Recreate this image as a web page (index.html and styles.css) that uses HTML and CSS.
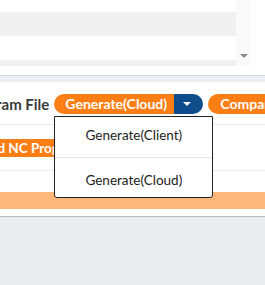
FILE: index.html
```html
<!DOCTYPE html>
<html lang="en">
<head>
    <meta charset="UTF-8">
    <meta name="viewport" content="width=device-width, initial-scale=1.0">
    <title>NC Program</title>
    <link rel="stylesheet" href="styles.css">
</head>
<body>
    <div class="list-panel">
        <div class="list-rows">
            <div class="row blank"></div>
            <div class="row gray"></div>
            <div class="row"></div>
            <div class="row gray thin"></div>
        </div>
        <div class="scrollbar">
            <span class="scroll-arrow"></span>
        </div>
    </div>

    <div class="tab-strip"></div>

    <div class="toolbar">
        <span class="label">Program File</span>
        <div class="split">
            <button class="btn split-main">Generate(Cloud)</button>
            <button class="btn split-toggle"><span class="caret"></span></button>
            <!-- open dropdown -->
            <div class="menu">
                <div class="menu-item">Generate(Client)</div>
                <div class="menu-item">Generate(Cloud)</div>
            </div>
        </div>
        <button class="btn pill">Compare</button>
    </div>

    <div class="upload-row">
        <button class="btn upload">Upload NC Program</button>
    </div>

    <div class="progress-row">
        <div class="progress"></div>
    </div>

    <div class="footer"></div>
</body>
</html>
```

FILE: styles.css
```css
* {
    margin: 0;
    padding: 0;
    box-sizing: border-box;
}

body {
    font-family: 'Lato', 'Open Sans', sans-serif;
    background: #fff;
    width: 265px;
    height: 285px;
    overflow: hidden;
    display: flex;
    flex-direction: column;
}

.list-panel {
    display: flex;
    height: 66px;
    margin-right: 14px;
}

.list-rows {
    flex: 1;
    display: flex;
    flex-direction: column;
}

.row {
    height: 24px;
    background: #fff;
}

.row.blank {
    height: 12px;
}

.row.gray {
    background: #f0f0f0;
}

.row.thin {
    height: 6px;
}

.scrollbar {
    width: 15px;
    background: #fafafa;
    display: flex;
    align-items: flex-end;
    justify-content: center;
    padding-bottom: 8px;
}

.scroll-arrow {
    width: 0;
    height: 0;
    border-left: 4px solid transparent;
    border-right: 4px solid transparent;
    border-top: 4px solid #888;
}

.tab-strip {
    margin-top: 9px;
    height: 7px;
    border-top: 1px solid #d3d8de;
    background: #eaeef3;
}

.toolbar {
    height: 43px;
    display: flex;
    align-items: center;
    gap: 5px;
    border-bottom: 1px solid #ededed;
    padding-top: 1px;
}

.label {
    font-size: 15px;
    font-weight: bold;
    color: #3a3a3a;
    margin-left: -35px;
    white-space: nowrap;
}

.btn {
    font-family: inherit;
    border: none;
    color: #fff;
    font-weight: bold;
    font-size: 14px;
    white-space: nowrap;
    cursor: pointer;
}

.split {
    position: relative;
    display: flex;
}

.split-main {
    width: 120px;
    height: 20px;
    background: #fd7e14;
    border-radius: 10px 0 0 10px;
    text-align: left;
    padding-left: 11px;
}

.split-toggle {
    width: 29px;
    height: 20px;
    background: #0f4c8c;
    border-radius: 0 10px 10px 0;
    display: flex;
    align-items: center;
    justify-content: center;
    padding-right: 4px;
}

.caret {
    width: 0;
    height: 0;
    border-left: 4px solid transparent;
    border-right: 4px solid transparent;
    border-top: 4px solid #fff;
}

.pill {
    height: 20px;
    background: #fd7e14;
    border-radius: 10px;
    padding: 0 12px;
}

.menu {
    position: absolute;
    top: 22px;
    left: 0;
    width: 159px;
    background: #fff;
    border: 1px solid #222;
    border-radius: 0 0 3px 3px;
    z-index: 10;
}

.menu-item {
    height: 40px;
    display: flex;
    align-items: center;
    justify-content: center;
    font-size: 13.5px;
    color: #222;
    padding-bottom: 4px;
}

.menu-item + .menu-item {
    border-top: 1px solid #e6e6e6;
    padding-bottom: 0;
    padding-top: 6px;
}

.upload-row {
    height: 46px;
    display: flex;
    align-items: center;
    border-bottom: 1px solid #ededed;
}

.upload {
    height: 18px;
    background: #fd7e14;
    border-radius: 2px;
    padding: 0 8px;
    margin-left: -46px;
    font-size: 13.5px;
}

.progress-row {
    height: 42px;
    padding-top: 21px;
}

.progress {
    height: 17px;
    background: #fdb77b;
}

.footer {
    flex: 1;
    border-top: 1px solid #b9bdc3;
    background: #e9ecf1;
    margin-top: 3px;
}
```
